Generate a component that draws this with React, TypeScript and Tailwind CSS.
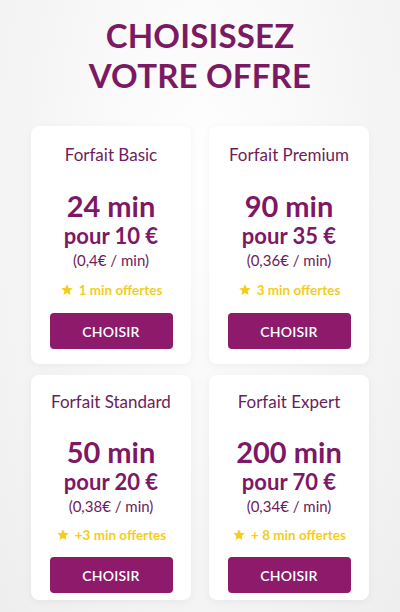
import React from "react";

const PLANS = [
  { name: "Forfait Basic", minutes: "24 min", price: "pour 10 €", rate: "(0,4€ / min)", bonus: "1 min offertes" },
  { name: "Forfait Premium", minutes: "90 min", price: "pour 35 €", rate: "(0,36€ / min)", bonus: "3 min offertes" },
  { name: "Forfait Standard", minutes: "50 min", price: "pour 20 €", rate: "(0,38€ / min)", bonus: "+3 min offertes" },
  { name: "Forfait Expert", minutes: "200 min", price: "pour 70 €", rate: "(0,34€ / min)", bonus: "+ 8 min offertes" },
];

const Star = () => (
  <svg viewBox="0 0 24 24" className="w-[14px] h-[14px] shrink-0" fill="#f3cd1c">
    <path d="M12 2.2l2.9 6.3 6.9.7-5.2 4.6 1.5 6.8L12 17.1l-6.1 3.5 1.5-6.8-5.2-4.6 6.9-.7z" />
  </svg>
);

const PlanCard = ({ plan, last }: { plan: (typeof PLANS)[0]; last: boolean }) => {
  return (
    <div
      className={`w-[160px] bg-white rounded-lg shadow-[0_2px_10px_rgba(0,0,0,0.05)] flex flex-col items-center px-4 ${
        last ? "pt-[16px] pb-[7px]" : "pt-[18px] pb-[15px]"
      }`}
    >
      <div className="text-[17px] leading-[22px] text-[#6e1c5c] whitespace-nowrap">{plan.name}</div>
      <div
        className={`${last ? "mt-[23px]" : "mt-[24px]"} text-[29px] leading-[32px] font-bold text-[#7d1766] whitespace-nowrap`}
      >
        {plan.minutes}
      </div>
      <div className="mt-[-1px] text-[22px] leading-[30px] font-bold text-[#7d1766] whitespace-nowrap">
        {plan.price}
      </div>
      <div className="mt-[-1px] text-[15px] leading-[20px] text-[#6e1c5c] whitespace-nowrap">{plan.rate}</div>
      <div
        className={`${last ? "mt-[10px]" : "mt-[11px]"} flex items-center gap-[5px] text-[13.5px] leading-[18px] font-bold text-[#f3cd1c] whitespace-nowrap`}
      >
        <Star />
        <span>{plan.bonus}</span>
      </div>
      <button
        className={`${last ? "mt-[13px]" : "mt-[14px]"} w-[123px] h-[36px] rounded-[4px] bg-[#8e1a6c] text-white text-[14px] font-semibold tracking-[0.2px]`}
      >
        CHOISIR
      </button>
    </div>
  );
};

export default function App() {
  return (
    <div
      className="w-[400px] h-[612px] overflow-hidden bg-[radial-gradient(ellipse_at_50%_30%,#ffffff_0%,#f6f6f6_55%,#eeeeee_100%)]"
      style={{ fontFamily: "Lato, 'Noto Sans', sans-serif" }}
    >
      <h1 className="pt-[15px] text-center text-[33px] leading-[40px] font-bold text-[#7b1a63] tracking-[0.2px]">
        CHOISISSEZ
        <br />
        VOTRE OFFRE
      </h1>
      <div className="mt-[31px] grid grid-cols-2 gap-x-[18px] gap-y-[11px] w-[338px] mx-auto">
        {PLANS.map((plan, i) => (
          <PlanCard key={plan.name} plan={plan} last={i >= 2} />
        ))}
      </div>
    </div>
  );
}
